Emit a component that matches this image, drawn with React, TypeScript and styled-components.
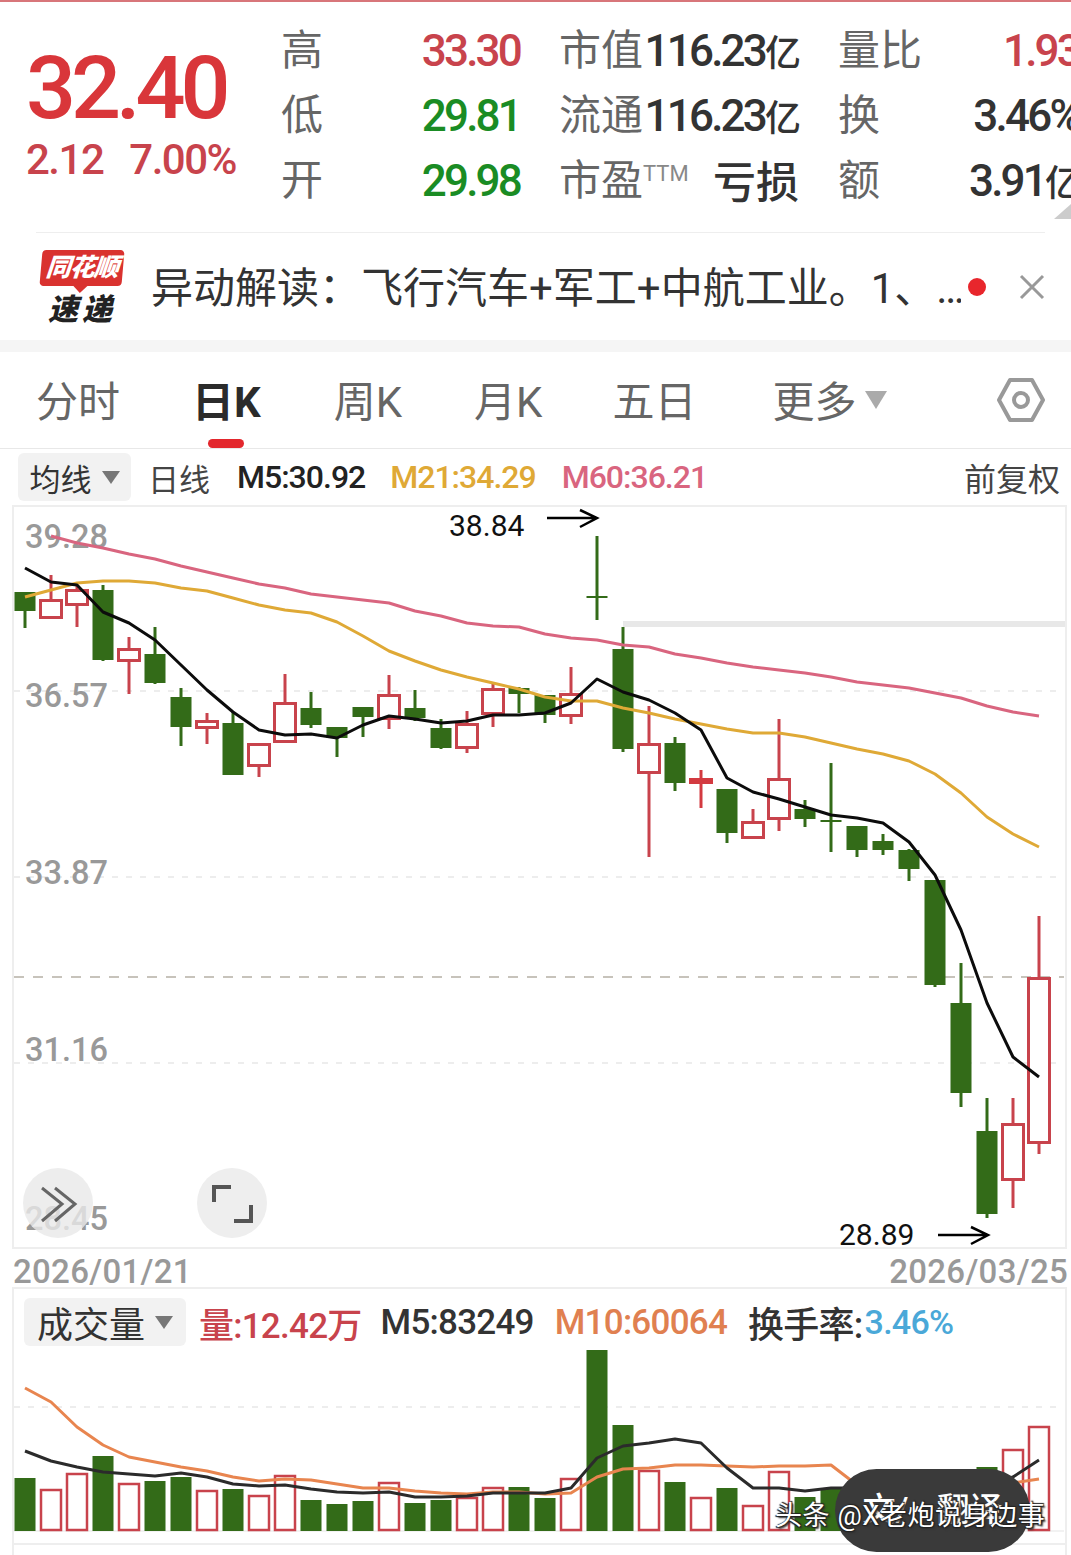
import styled, { createGlobalStyle } from "styled-components";

const FONT = `Roboto, "Noto Sans CJK SC", sans-serif`;
const RED = "#c8434c";
const GREEN = "#336b18";

const GlobalStyle = createGlobalStyle`
  html, body {
    margin: 0;
    padding: 0;
    background: #fff;
  }
  body {
    font-family: ${FONT};
  }
`;

const Page = styled.div`
  position: relative;
  width: 1071px;
  height: 1555px;
  overflow: hidden;
  background: #fff;
  border-top: 2px solid #d8767a;
  box-sizing: border-box;
`;

const Header = styled.div`
  position: relative;
  display: flex;
  height: 230px;
  padding-top: 16px;
  box-sizing: border-box;
  overflow: hidden;
`;

const PriceBlock = styled.div`
  width: 282px;
  flex: none;
  padding-left: 26px;
  box-sizing: border-box;
  color: #d9363a;
`;

const BigPrice = styled.div`
  font-size: 88px;
  font-weight: 500;
  line-height: 88px;
  letter-spacing: -5px;
  margin-top: 26px;
`;

const PriceChange = styled.div`
  display: flex;
  gap: 26px;
  font-size: 42px;
  font-weight: 500;
  line-height: 44px;
  letter-spacing: -1.5px;
  color: ${RED};
  margin-top: 6px;
`;

const StatsGrid = styled.div`
  display: grid;
  flex: none;
  grid-template-columns: 239px 240px 241px;
  grid-auto-rows: 65px;
  column-gap: 39px;
  margin-left: -1px;
`;

const StatCell = styled.div`
  display: flex;
  align-items: center;
  justify-content: space-between;
`;

const StatLabel = styled.span`
  font-size: 42px;
  color: #666;
  white-space: nowrap;
  margin-top: -8px;
`;

const Ttm = styled.sup`
  font-size: 22px;
  color: #888;
  vertical-align: 14px;
  line-height: 0;
`;

const StatValue = styled.span<{ $tone?: "red" | "green" | "dark"; $bold?: boolean }>`
  font-size: ${(p) => (p.$bold ? 43 : 44)}px;
  letter-spacing: ${(p) => (p.$bold ? 0 : -2.8)}px;
  margin-top: ${(p) => (p.$bold ? -4 : 0)}px;
  white-space: nowrap;
  font-weight: 500;
  color: ${(p) =>
    p.$tone === "red" ? RED : p.$tone === "green" ? "#1a8c24" : "#333"};
`;

const Unit = styled.span`
  display: inline-block;
  width: 34px;
  font-size: 36px;
  font-weight: 500;
  letter-spacing: 0;
`;

const CornerMark = styled.div`
  position: absolute;
  right: 0;
  bottom: 13px;
  width: 17px;
  height: 15px;
  background: #ccc;
  clip-path: polygon(100% 0, 100% 100%, 0 100%);
`;

const Divider = styled.div`
  height: 1px;
  margin: 0 26px 0 36px;
  background: #eee;
`;

const Ticker = styled.div`
  display: flex;
  align-items: center;
  height: 107px;
  padding-left: 38px;
  box-sizing: border-box;
`;

const Logo = styled.div`
  display: flex;
  flex-direction: column;
  align-items: center;
  width: 88px;
  flex: none;
  margin-top: 3px;
`;

const LogoBadge = styled.div`
  position: relative;
  width: 82px;
  height: 36px;
  background: #d9322f;
  border-radius: 4px;
  transform: skewX(-5deg);
  color: #fff;
  font-size: 25px;
  font-weight: 900;
  font-style: italic;
  line-height: 36px;
  text-align: center;
  letter-spacing: -1px;
  &::after {
    content: "";
    position: absolute;
    left: 34px;
    bottom: -7px;
    border: 7px solid transparent;
    border-bottom: 0;
    border-top-color: #d9322f;
  }
`;

const LogoName = styled.div`
  font-size: 30px;
  font-weight: 900;
  font-style: italic;
  line-height: 34px;
  color: #222;
  letter-spacing: 4px;
  margin-top: 7px;
`;

const TickerText = styled.div`
  margin-left: 25px;
  margin-top: -4px;
  width: 810px;
  flex: none;
  font-size: 42px;
  color: #333;
  white-space: nowrap;
  overflow: hidden;
`;

const TickerDot = styled.div`
  width: 18px;
  height: 18px;
  border-radius: 50%;
  background: #e8262c;
  flex: none;
  margin-left: 7px;
`;

const CloseIcon = styled.svg`
  width: 26px;
  height: 26px;
  margin-left: 33px;
  flex: none;
`;

const Band = styled.div`
  height: 12px;
  background: #f5f5f5;
`;

const Tabs = styled.div`
  display: flex;
  align-items: center;
  height: 97px;
  padding: 0 25px 0 36px;
  box-sizing: border-box;
  border-bottom: 1px solid #e8e8e8;
`;

const Tab = styled.div<{ $active?: boolean; $gap: number }>`
  position: relative;
  display: flex;
  align-items: center;
  margin-right: ${(p) => p.$gap}px;
  padding-bottom: 4px;
  box-sizing: border-box;
  font-size: 42px;
  font-weight: ${(p) => (p.$active ? 700 : 400)};
  color: ${(p) => (p.$active ? "#2b2b2b" : "#666")};
  height: 100%;
  &::after {
    content: "";
    display: ${(p) => (p.$active ? "block" : "none")};
    position: absolute;
    left: 16px;
    bottom: 0;
    width: 36px;
    height: 9px;
    border-radius: 5px;
    background: #e3272d;
  }
`;

const Caret = styled.i<{ $w: number; $h: number; $color: string; $left: number; $top?: number }>`
  display: inline-block;
  width: 0;
  height: 0;
  margin-left: ${(p) => p.$left}px;
  margin-top: ${(p) => p.$top ?? 0}px;
  border-left: ${(p) => p.$w / 2}px solid transparent;
  border-right: ${(p) => p.$w / 2}px solid transparent;
  border-top: ${(p) => p.$h}px solid ${(p) => p.$color};
`;

const HexIcon = styled.svg`
  width: 50px;
  height: 48px;
  margin-left: auto;
`;

const IndicatorBar = styled.div`
  display: flex;
  align-items: center;
  height: 56px;
  padding: 0 11px 0 18px;
  box-sizing: border-box;
`;

const Picker = styled.div<{ $width: number; $size: number }>`
  display: flex;
  align-items: center;
  flex: none;
  justify-content: center;
  width: ${(p) => p.$width}px;
  height: 48px;
  border-radius: 6px;
  background: #f2f2f2;
  font-size: ${(p) => p.$size}px;
  color: #333;
`;

const Legend = styled.span<{ $color: string; $left: number; $size?: number; $track?: number }>`
  margin-left: ${(p) => p.$left}px;
  font-size: ${(p) => p.$size ?? 32}px;
  font-weight: 500;
  letter-spacing: ${(p) => p.$track ?? -1}px;
  color: ${(p) => p.$color};
  white-space: nowrap;
`;

const PlainLabel = styled.span<{ $left: string; $size: number }>`
  margin-left: ${(p) => p.$left};
  font-size: ${(p) => p.$size}px;
  color: #444;
  white-space: nowrap;
`;

const ChartFrame = styled.div`
  position: relative;
  height: 744px;
  margin: 0 4px 0 12px;
  border: 2px solid #eee;
  box-sizing: border-box;
`;

const ChartSvg = styled.svg`
  display: block;
  width: 100%;
  height: 100%;
`;

const RoundButton = styled.div<{ $left: number; $soft?: boolean }>`
  position: absolute;
  left: ${(p) => p.$left}px;
  top: 661px;
  width: 70px;
  height: 70px;
  border-radius: 50%;
  background: ${(p) => (p.$soft ? "rgba(232,232,232,.8)" : "#eee")};
`;

const DateRow = styled.div`
  display: flex;
  justify-content: space-between;
  height: 38px;
  padding: 3px 3px 0 13px;
  font-size: 33px;
  font-weight: 500;
  line-height: 38px;
  letter-spacing: 0.3px;
  color: #999;
  box-sizing: border-box;
  position: relative;
  top: 1px;
`;

const VolumePanel = styled.div`
  height: 256px;
  margin: 0 4px 0 12px;
  border: solid #eee;
  border-width: 2px 2px 0;
  box-sizing: border-box;
`;

const VolumeHeader = styled.div`
  display: flex;
  align-items: center;
  height: 50px;
  margin-top: 8px;
  padding-left: 10px;
`;

const VolumeSvg = styled.svg`
  display: block;
  width: 100%;
  height: 196px;
`;

const FooterBox = styled.div`
  height: 20px;
  margin: 0 4px 0 12px;
  border: solid #eee;
  border-width: 2px 2px 0;
  box-sizing: border-box;
`;

const FloatPill = styled.div`
  position: absolute;
  left: 835px;
  top: 1467px;
  width: 195px;
  height: 83px;
  border-radius: 42px;
  background: #3a3a3a;
  color: #fff;
  display: flex;
  align-items: center;
  justify-content: center;
  gap: 28px;
  font-size: 33px;
  font-weight: 500;
  padding-bottom: 8px;
  box-sizing: border-box;
`;

const Watermark = styled.div`
  position: absolute;
  left: 775px;
  top: 1496px;
  font-size: 27px;
  letter-spacing: 0.6px;
  line-height: 36px;
  color: #fff;
  white-space: nowrap;
  text-shadow: 1px 1px 1px #222, -1px 1px 1px #222, 1px -1px 1px #222, 2px 2px 2px #333;
`;

type Candle = [string, number, number, number, number];

// up/down flag, high, body top, body bottom, low
const candles: Candle[] = [
  ["g", 592, 592, 611, 628],
  ["r", 575, 599, 619, 619],
  ["r", 585, 589, 606, 627],
  ["g", 585, 590, 660, 661],
  ["r", 637, 648, 662, 694],
  ["g", 627, 654, 683, 684],
  ["g", 688, 697, 727, 746],
  ["r", 713, 720, 729, 744],
  ["g", 712, 723, 775, 775],
  ["r", 743, 743, 767, 777],
  ["r", 674, 702, 743, 743],
  ["g", 692, 708, 725, 728],
  ["g", 727, 727, 738, 757],
  ["g", 707, 707, 717, 737],
  ["r", 675, 694, 720, 729],
  ["g", 690, 708, 718, 721],
  ["g", 719, 728, 748, 749],
  ["r", 711, 723, 749, 753],
  ["r", 683, 688, 715, 727],
  ["g", 687, 688, 694, 713],
  ["g", 695, 695, 715, 723],
  ["r", 667, 693, 717, 724],
  ["g", 536, 596, 598, 620],
  ["g", 627, 649, 749, 752],
  ["r", 706, 743, 774, 857],
  ["g", 737, 743, 783, 791],
  ["s", 770, 778, 784, 808],
  ["g", 789, 789, 833, 843],
  ["r", 809, 821, 839, 839],
  ["r", 719, 778, 820, 831],
  ["g", 800, 809, 819, 827],
  ["g", 763, 820, 822, 852],
  ["g", 826, 826, 850, 857],
  ["g", 834, 841, 850, 855],
  ["g", 849, 850, 869, 881],
  ["g", 880, 880, 985, 987],
  ["g", 963, 1003, 1093, 1107],
  ["g", 1098, 1131, 1214, 1218],
  ["r", 1098, 1123, 1181, 1208],
  ["r", 916, 977, 1144, 1154],
];

const m5 = [
  568, 582, 585, 612, 623, 640, 665, 690, 712, 730, 735, 734, 738, 725, 716, 719, 723, 721, 715, 715,
  713, 703, 679, 692, 700, 713, 730, 778, 792, 799, 807, 815, 818, 823, 842, 875, 930, 1003, 1057, 1077,
];
const m21 = [
  597, 590, 583, 581, 581, 583, 588, 591, 598, 605, 610, 613, 622, 636, 651, 661, 670, 677, 683, 689,
  697, 701, 701, 708, 713, 719, 724, 729, 733, 733, 737, 743, 749, 754, 761, 774, 793, 817, 834, 847,
];
const m60 = [
  0, 536, 543, 548, 554, 559, 566, 572, 578, 584, 588, 594, 597, 600, 603, 611, 616, 623, 626, 627,
  634, 638, 640, 645, 647, 654, 658, 663, 667, 670, 673, 677, 682, 685, 688, 693, 698, 706, 712, 716,
];

const volumes = [
  1478, 1489, 1473, 1456, 1483, 1481, 1477, 1490, 1489, 1495, 1475, 1500, 1504, 1501, 1482, 1503, 1500, 1497,
  1487, 1487, 1498, 1478, 1350, 1425, 1470, 1482, 1497, 1488, 1505, 1471, 1497, 1488, 1495, 1500, 1500, 1490,
  1490, 1467, 1449, 1426,
];
const volMa5 = [
  1451, 1461, 1467, 1472, 1474, 1476, 1473, 1477, 1484, 1486, 1485, 1489, 1492, 1493, 1492, 1497, 1497, 1496,
  1493, 1493, 1493, 1488, 1458, 1446, 1443, 1439, 1443, 1468, 1488, 1488, 1491, 1488, 1488, 1490, 1492, 1492,
  1490, 1486, 1477, 1460,
];
const volMa10 = [
  1388, 1402, 1427, 1445, 1457, 1462, 1467, 1471, 1477, 1481, 1479, 1480, 1484, 1488, 1488, 1491, 1493, 1494,
  1492, 1492, 1494, 1493, 1477, 1469, 1468, 1465, 1465, 1466, 1467, 1466, 1466, 1465, 1485, 1490, 1490, 1490,
  1488, 1486, 1483, 1479,
];

const xAt = (i: number) => 25 + 26 * i;

const points = (ys: number[]) =>
  ys
    .map((y, i) => (y ? `${xAt(i)},${y}` : ""))
    .filter(Boolean)
    .join(" ");

function MaLine({ ys, color, width }: { ys: number[]; color: string; width: number }) {
  return <polyline points={points(ys)} fill="none" stroke={color} strokeWidth={width} strokeLinejoin="round" />;
}

function CandleMark({ c, i }: { c: Candle; i: number }) {
  const [kind, high, top, bottom, low] = c;
  const x = xAt(i);
  if (kind === "g") {
    return (
      <g>
        <line x1={x} x2={x} y1={high} y2={low} stroke={GREEN} strokeWidth={3} />
        <rect x={x - 10.5} y={top} width={21} height={bottom - top} fill={GREEN} />
      </g>
    );
  }
  if (kind === "s") {
    return (
      <g>
        <line x1={x} x2={x} y1={high} y2={low} stroke="#d33a40" strokeWidth={3} />
        <rect x={x - 12} y={top} width={24} height={bottom - top} fill="#d33a40" />
      </g>
    );
  }
  return (
    <g>
      <line x1={x} x2={x} y1={high} y2={top} stroke={RED} strokeWidth={3} />
      <line x1={x} x2={x} y1={bottom} y2={low} stroke={RED} strokeWidth={3} />
      <rect x={x - 10.5} y={top + 1.5} width={21} height={bottom - top - 3} fill="#fff" stroke={RED} strokeWidth={3} />
    </g>
  );
}

function PriceChart() {
  const gridLines = [691, 877, 1063];
  const labels: [string, number][] = [
    ["39.28", 548],
    ["36.57", 707],
    ["33.87", 884],
    ["31.16", 1061],
    ["28.45", 1230],
  ];
  return (
    <ChartSvg viewBox="14 507 1051 740" preserveAspectRatio="none">
      {gridLines.map((y) => (
        <line key={y} x1={14} x2={1064} y1={y} y2={y} stroke="#e8e8e8" strokeWidth={1.5} strokeDasharray="6 8" />
      ))}
      <line x1={14} x2={1064} y1={977} y2={977} stroke="#b5b0a5" strokeWidth={1.5} strokeDasharray="10 9" />
      <rect x={623} y={621} width={442} height={6} fill="#e8e8e8" />
      {labels.map(([text, y]) => (
        <text key={text} x={25} y={y} fontSize={32.5} fontWeight={500} fill="#999" fontFamily="Roboto, sans-serif">
          {text}
        </text>
      ))}
      {candles.map((c, i) => (
        <CandleMark key={i} c={c} i={i} />
      ))}
      <MaLine ys={m60} color="#d9657f" width={3} />
      <MaLine ys={m21} color="#dfa936" width={3} />
      <MaLine ys={m5} color="#0c0c0c" width={3} />
      <text x={449} y={536} fontSize={30} fill="#111" fontFamily="Roboto, sans-serif">
        38.84
      </text>
      <path d="M547 518H596M580 510L597 518L580 527" fill="none" stroke="#000" strokeWidth={2.5} />
      <text x={839} y={1245} fontSize={30} fill="#111" fontFamily="Roboto, sans-serif">
        28.89
      </text>
      <path d="M938 1235H987M971 1227L988 1235L971 1244" fill="none" stroke="#000" strokeWidth={2.5} />
    </ChartSvg>
  );
}

function VolumeChart() {
  return (
    <VolumeSvg viewBox="14 1347 1051 196" preserveAspectRatio="none">
      <line x1={14} x2={1064} y1={1407} y2={1407} stroke="#e8e8e8" strokeWidth={1.5} strokeDasharray="6 8" />
      <line x1={14} x2={1064} y1={1531} y2={1531} stroke="#eee" strokeWidth={1.5} />
      {volumes.map((top, i) =>
        candles[i][0] === "g" ? (
          <rect key={i} x={xAt(i) - 10.5} y={top} width={21} height={1531 - top} fill={GREEN} />
        ) : (
          <rect
            key={i}
            x={xAt(i) - 10}
            y={top + 1}
            width={20}
            height={1530 - top - 1}
            fill="#fff"
            stroke={RED}
            strokeWidth={2.5}
          />
        )
      )}
      <MaLine ys={volMa10} color="#e8854f" width={3} />
      <MaLine ys={volMa5} color="#2b2b2b" width={3} />
    </VolumeSvg>
  );
}

export default function App() {
  return (
    <Page>
      <GlobalStyle />
      <Header>
        <PriceBlock>
          <BigPrice>32.40</BigPrice>
          <PriceChange>
            <span>2.12</span>
            <span>7.00%</span>
          </PriceChange>
        </PriceBlock>
        <StatsGrid>
          <StatCell>
            <StatLabel>高</StatLabel>
            <StatValue $tone="red">33.30</StatValue>
          </StatCell>
          <StatCell>
            <StatLabel>市值</StatLabel>
            <StatValue>
              116.23<Unit>亿</Unit>
            </StatValue>
          </StatCell>
          <StatCell>
            <StatLabel>量比</StatLabel>
            <StatValue $tone="red">1.93</StatValue>
          </StatCell>
          <StatCell>
            <StatLabel>低</StatLabel>
            <StatValue $tone="green">29.81</StatValue>
          </StatCell>
          <StatCell>
            <StatLabel>流通</StatLabel>
            <StatValue>
              116.23<Unit>亿</Unit>
            </StatValue>
          </StatCell>
          <StatCell>
            <StatLabel>换</StatLabel>
            <StatValue>3.46%</StatValue>
          </StatCell>
          <StatCell>
            <StatLabel>开</StatLabel>
            <StatValue $tone="green">29.98</StatValue>
          </StatCell>
          <StatCell>
            <StatLabel>
              市盈<Ttm>TTM</Ttm>
            </StatLabel>
            <StatValue $bold>亏损</StatValue>
          </StatCell>
          <StatCell>
            <StatLabel>额</StatLabel>
            <StatValue>
              3.91<Unit>亿</Unit>
            </StatValue>
          </StatCell>
        </StatsGrid>
        <CornerMark />
      </Header>
      <Divider />
      <Ticker>
        <Logo>
          <LogoBadge>同花顺</LogoBadge>
          <LogoName>速递</LogoName>
        </Logo>
        <TickerText>异动解读：飞行汽车+军工+中航工业。1、…</TickerText>
        <TickerDot />
        <CloseIcon viewBox="0 0 26 26">
          <path d="M2 2L24 24M24 2L2 24" stroke="#999" strokeWidth={3} fill="none" />
        </CloseIcon>
      </Ticker>
      <Band />
      <Tabs>
        <Tab $gap={72}>分时</Tab>
        <Tab $gap={73} $active>
          日K
        </Tab>
        <Tab $gap={72}>周K</Tab>
        <Tab $gap={70}>月K</Tab>
        <Tab $gap={76}>五日</Tab>
        <Tab $gap={0}>
          更多
          <Caret $w={22} $h={18} $color="#aaa" $left={9} $top={4} />
        </Tab>
        <HexIcon viewBox="0 0 50 48">
          <path
            d="M14 4H36L47 24L36 44H14L3 24Z"
            fill="none"
            stroke="#999"
            strokeWidth={4}
            strokeLinejoin="round"
          />
          <circle cx={25} cy={24} r={7} fill="none" stroke="#999" strokeWidth={4} />
        </HexIcon>
      </Tabs>
      <IndicatorBar>
        <Picker $width={113} $size={31}>
          均线
          <Caret $w={18} $h={13} $color="#777" $left={10} />
        </Picker>
        <PlainLabel $left="17px" $size={31}>
          日线
        </PlainLabel>
        <Legend $color="#222" $left={27}>
          M5:30.92
        </Legend>
        <Legend $color="#dfa936" $left={25}>
          M21:34.29
        </Legend>
        <Legend $color="#d9657f" $left={26}>
          M60:36.21
        </Legend>
        <PlainLabel $left="auto" $size={32}>
          前复权
        </PlainLabel>
      </IndicatorBar>
      <ChartFrame>
        <PriceChart />
        <RoundButton $left={9} $soft>
          <svg viewBox="0 0 70 70" width={70} height={70}>
            <path d="M19 20L39 36L19 53M32 20L52 36L32 53" fill="none" stroke="#666" strokeWidth={3} />
          </svg>
        </RoundButton>
        <RoundButton $left={183}>
          <svg viewBox="0 0 70 70" width={70} height={70}>
            <path d="M17 34V19H34M37 53H54V37" fill="none" stroke="#555" strokeWidth={4} />
          </svg>
        </RoundButton>
      </ChartFrame>
      <DateRow>
        <span>2026/01/21</span>
        <span>2026/03/25</span>
      </DateRow>
      <VolumePanel>
        <VolumeHeader>
          <Picker $width={162} $size={36}>
            成交量
            <Caret $w={18} $h={13} $color="#777" $left={10} />
          </Picker>
          <Legend $color={RED} $left={13} $size={35} $track={-0.75}>
            量:12.42万
          </Legend>
          <Legend $color="#333" $left={19} $size={35} $track={-0.75}>
            M5:83249
          </Legend>
          <Legend $color="#e08050" $left={21} $size={35} $track={-0.75}>
            M10:60064
          </Legend>
          <Legend $color="#333" $left={21} $size={36} $track={-0.75}>
            换手率:
          </Legend>
          <Legend $color="#4aa8d8" $left={2} $size={34} $track={-0.75}>
            3.46%
          </Legend>
        </VolumeHeader>
        <VolumeChart />
      </VolumePanel>
      <FooterBox />
      <FloatPill>
        <span>文/</span>
        <span>翻译</span>
      </FloatPill>
      <Watermark>头条 @X老炮说身边事</Watermark>
    </Page>
  );
}
